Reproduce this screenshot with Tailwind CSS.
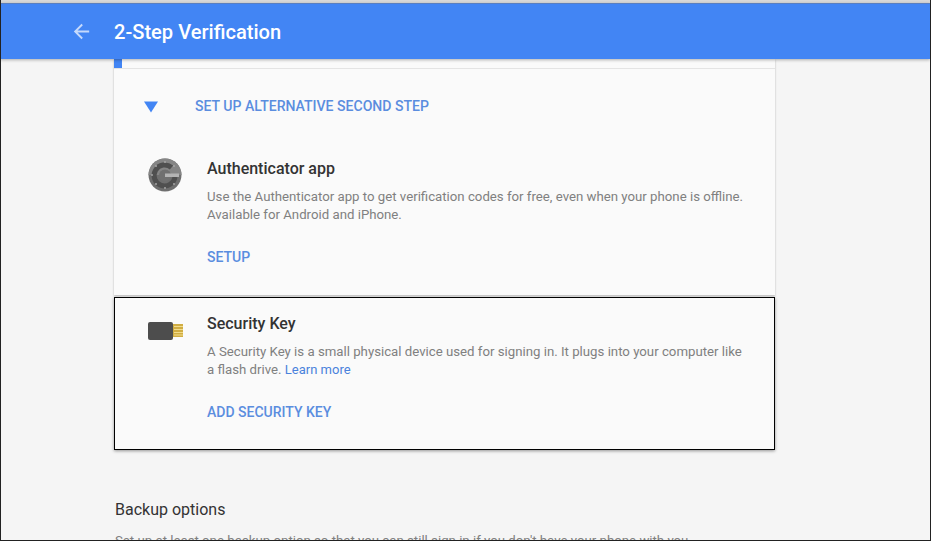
<!DOCTYPE html>
<html>
<head>
<meta charset="utf-8">
<script src="https://cdn.jsdelivr.net/npm/@tailwindcss/browser@4"></script>
</head>
<body class="m-0 overflow-hidden bg-[#f5f5f5]">
<div class="w-[931px] h-[541px] overflow-hidden relative bg-[#f5f5f5] border-x border-b border-[#222] font-['Roboto',sans-serif] flex flex-col">
  <div class="h-[3px] shrink-0 bg-[#d8d8d8] -mx-px"></div>
  <header class="h-[56px] shrink-0 bg-[#4285f4] shadow-[0_1px_3px_rgba(0,0,0,0.3)] flex items-center pl-[70px] gap-[21px] relative z-10 -ml-px border-t border-[#5a7fc0]">
    <svg width="23" height="23" viewBox="0 0 24 24" fill="#c6dafc"><path d="M20 11H7.830l5.590-5.590L12 4l-8 8 8 8 1.410-1.410L7.830 13H20v-2z"/></svg>
    <h1 class="mt-[2px] text-[20.100px] font-medium text-white leading-none">2-Step Verification</h1>
  </header>
  <main class="ml-[113px] w-[661px] flex flex-col">
    <section class="relative bg-[#fafafa] h-[236px] shadow-[0_1px_2px_rgba(0,0,0,0.25)]">
      <div class="absolute left-0 top-0 w-[8px] h-[9px] bg-[#4285f4]"></div>
      <div class="h-[10px] border-b border-[#e4e4e4]"></div>
      <div class="flex items-center h-[75px]">
        <svg class="ml-[30px] mt-[1px]" width="14" height="12" viewBox="0 0 15 12"><path d="M0 0h15L7.500 12z" fill="#4285f4"/></svg>
        <span class="ml-[37px] text-[14.050px] font-medium text-[#5a8ddf] leading-none">SET UP ALTERNATIVE SECOND STEP</span>
      </div>
      <div class="flex pl-[33px] pt-[15px]">
        <svg class="mt-[-2px] shrink-0" width="36" height="36" viewBox="0 0 36 36">
          <circle cx="18" cy="18" r="16.500" fill="#6e6e6e"/>
          <path d="M1.500 18a16.500 16.500 0 0 1 33 0z" fill="#858585"/>
          <circle cx="18" cy="18.500" r="6" fill="#707070"/>
          <path d="M24.500 10.500A10.500 10.500 0 1 0 28 20" fill="none" stroke="#4f4f4f" stroke-width="5"/>
          <path d="M18 16.500h14v3.500H18z" fill="#b4b4b4"/>
          <circle cx="5" cy="18" r="1" fill="#a5a5a5"/><circle cx="18" cy="5" r="1" fill="#a5a5a5"/><circle cx="18" cy="31" r="1" fill="#a5a5a5"/><circle cx="9" cy="9" r="1" fill="#a5a5a5"/><circle cx="9" cy="27" r="1" fill="#a5a5a5"/><circle cx="27" cy="27" r="1" fill="#a5a5a5"/><circle cx="27" cy="9" r="1" fill="#a5a5a5"/>
        </svg>
        <div class="ml-[24px] w-[545px]">
          <h2 class="text-[16px] font-medium text-[#333] leading-[20px]">Authenticator app</h2>
          <p class="mt-[9px] text-[13.220px] text-[#808080] leading-[18px] whitespace-nowrap">Use the Authenticator app to get verification codes for free, even when your phone is offline.<br>Available for Android and iPhone.</p>
          <a class="block mt-[25px] text-[14px] font-medium text-[#5a8ddf] leading-[16px]">SETUP</a>
        </div>
      </div>
    </section>
    <section class="relative mt-[2px] h-[153px] bg-[#fafafa] border border-black shadow-[0_1px_3px_rgba(0,0,0,0.4)] flex pl-[33px] pt-[16px]">
      <svg class="mt-[7px] shrink-0" width="35" height="20" viewBox="0 0 35 20">
        <rect x="0" y="1" width="25" height="18" rx="2" fill="#4d4d4d"/>
        <rect x="25" y="3" width="10" height="13" fill="#d0ad42"/>
        <path d="M26 5.500h9M26 8.500h9M26 11.500h9M26 14h9" stroke="#f2dc8c" stroke-width="1"/>
      </svg>
      <div class="ml-[24px] w-[545px]">
        <h2 class="text-[16px] font-medium text-[#333] leading-[20px]">Security Key</h2>
        <p class="mt-[9px] text-[13.220px] text-[#808080] leading-[18px] whitespace-nowrap">A Security Key is a small physical device used for signing in. It plugs into your computer like<br>a flash drive. <a class="text-[13px] text-[#4a82dc]">Learn more</a></p>
        <a class="block mt-[25px] text-[14px] font-medium text-[#5a8ddf] leading-[16px]">ADD SECURITY KEY</a>
      </div>
    </section>
    <h2 class="ml-[1px] mt-[50px] text-[16px] text-[#333] leading-[20px]">Backup options</h2>
    <p class="ml-[1px] mt-[12px] text-[13.220px] text-[#808080] leading-[18px] whitespace-nowrap">Set up at least one backup option so that you can still sign in if you don't have your phone with you.</p>
  </main>
</div>
</body>
</html>
